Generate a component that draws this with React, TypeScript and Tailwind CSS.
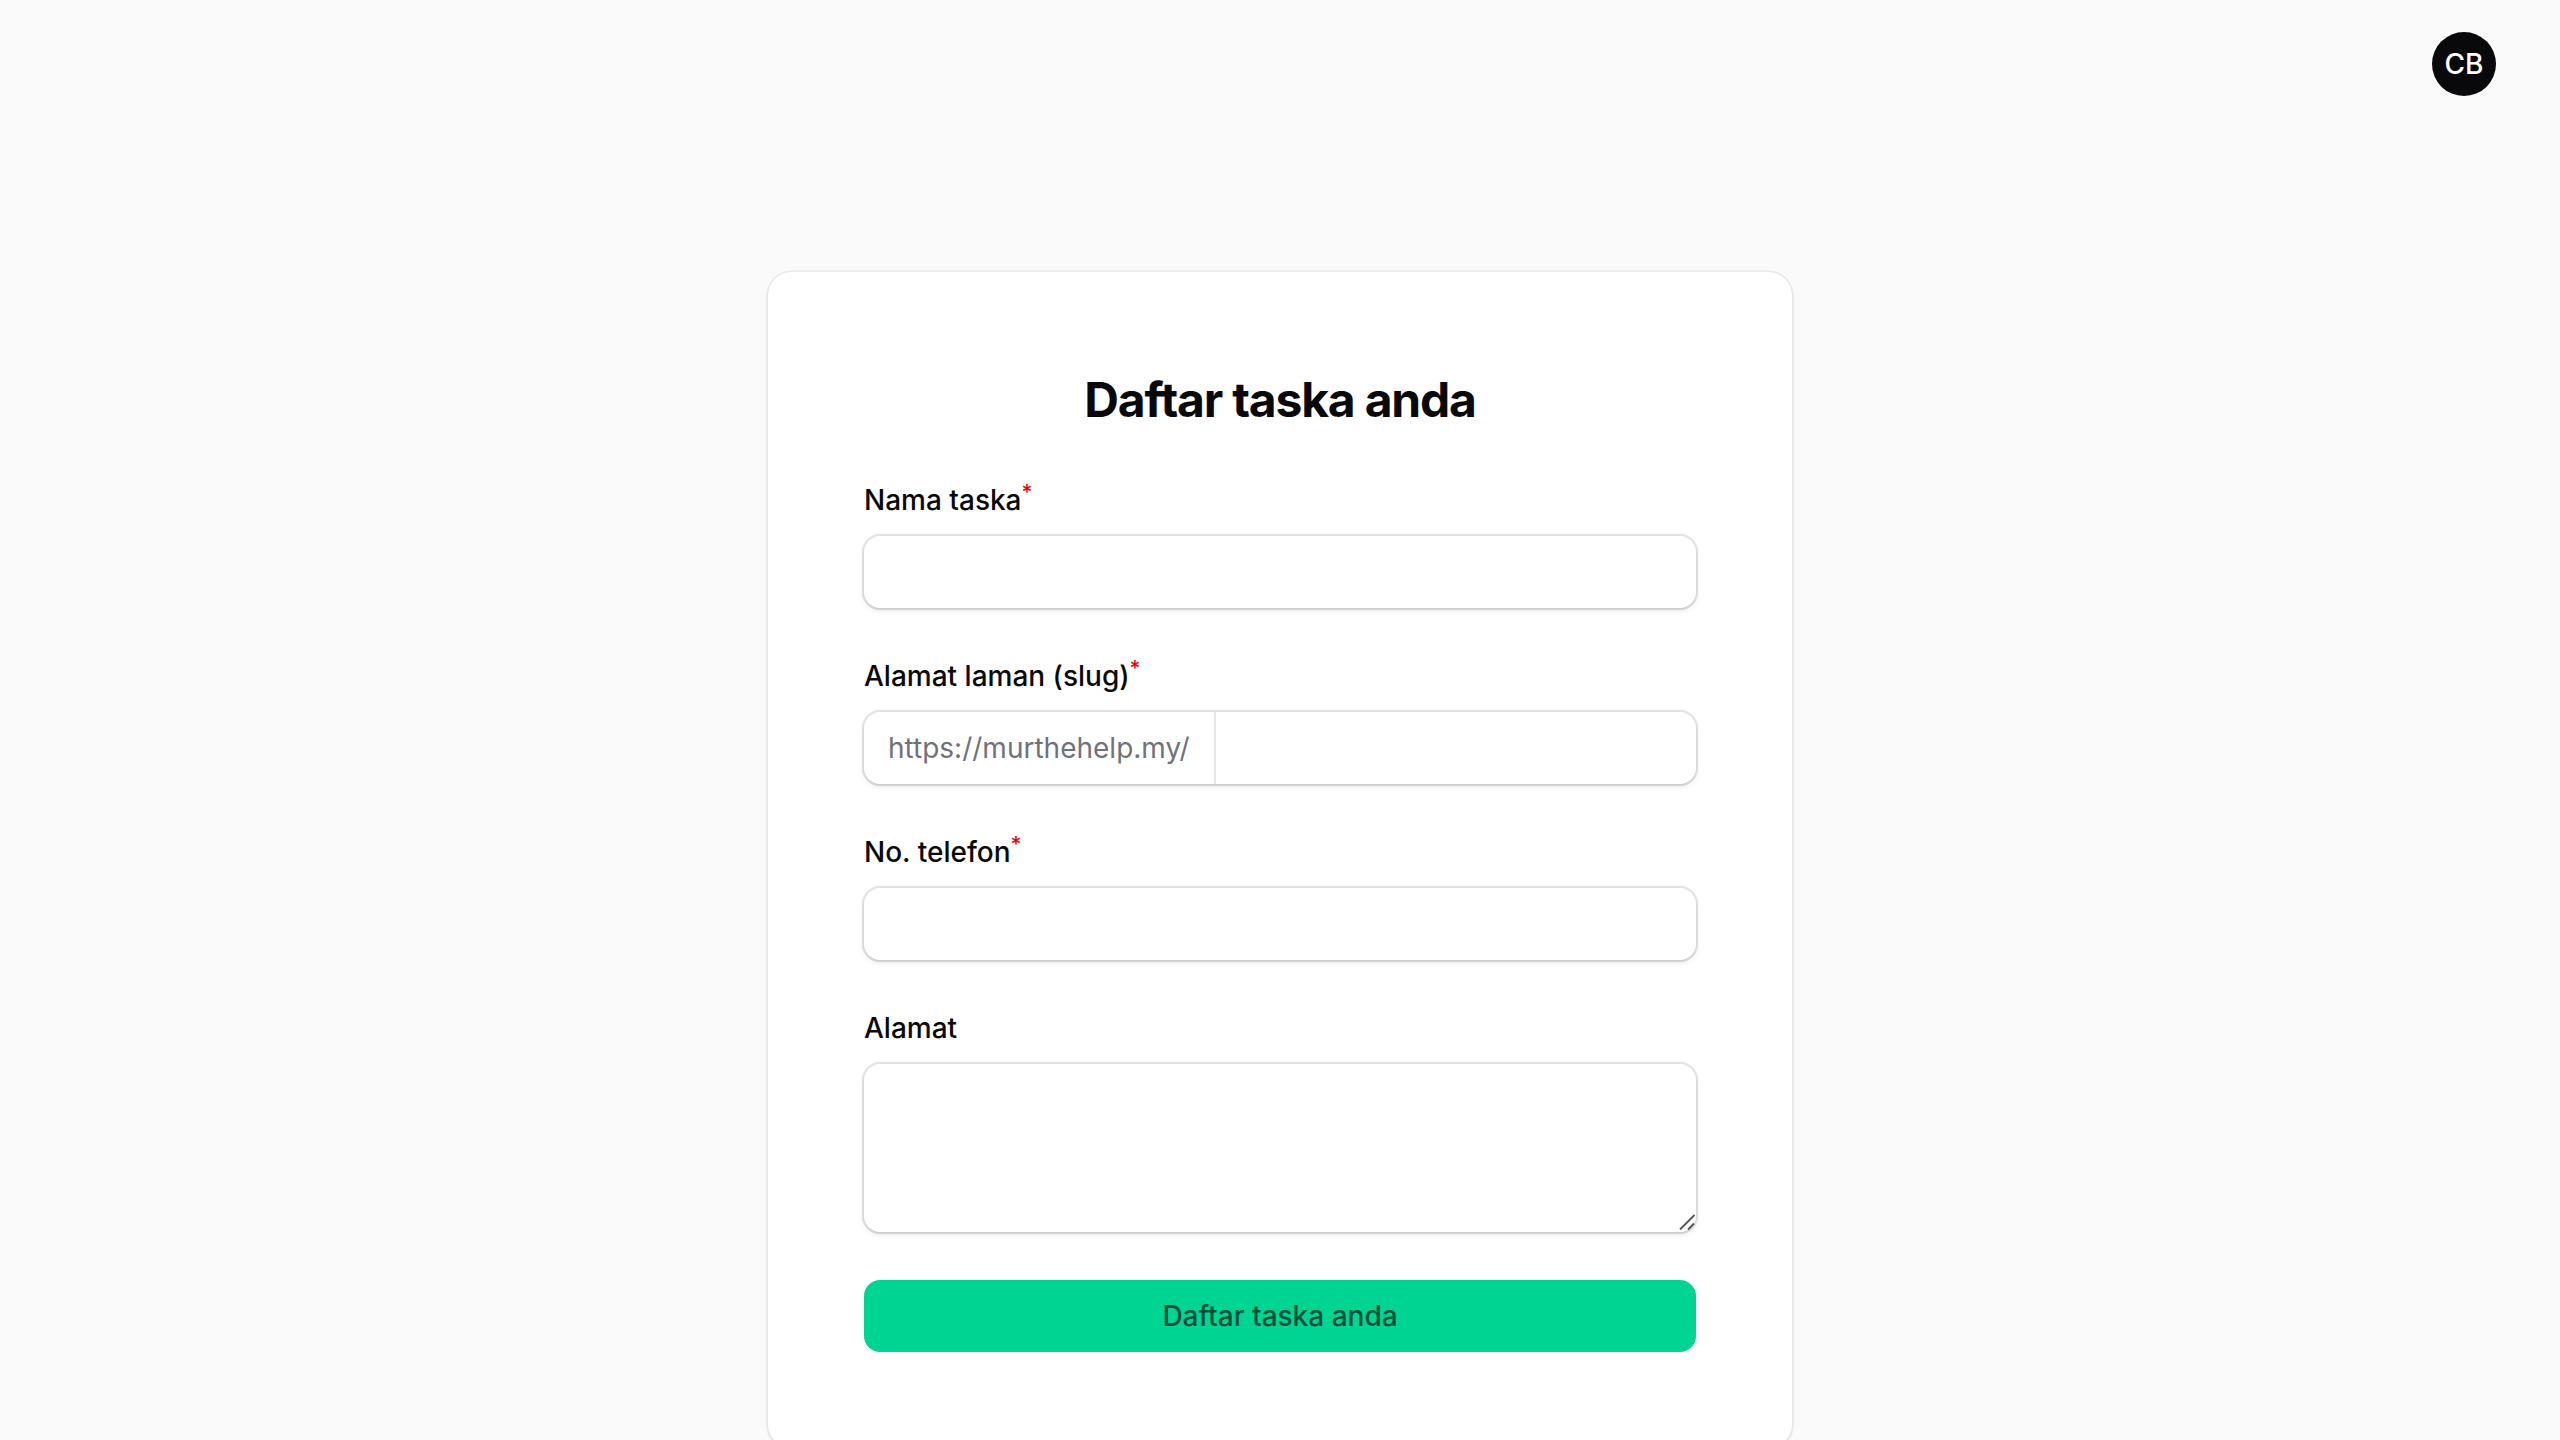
import { ReactNode } from "react";

type FieldProps = {
  id: string;
  label: string;
  required?: boolean;
  children: ReactNode;
};

const control =
  "flex rounded-2xl bg-white ring-2 ring-zinc-950/10 shadow-[0_2px_6px_0_rgb(0_0_0/0.1),0_2px_4px_-2px_rgb(0_0_0/0.1)] focus-within:ring-emerald-500";

const input =
  "block min-w-0 flex-1 bg-transparent px-6 py-3 text-[28px] leading-12 text-zinc-950 outline-none";

function Field({ id, label, required, children }: FieldProps) {
  return (
    <div className="flex flex-col gap-4">
      <label
        htmlFor={id}
        className="text-[28px] leading-10 font-medium text-zinc-950"
      >
        {label}
        {required && <sup className="text-red-600">*</sup>}
      </label>
      {children}
    </div>
  );
}

function ResizeGrip() {
  return (
    <svg
      className="pointer-events-none absolute right-0 bottom-0 size-5"
      viewBox="0 0 20 20"
      fill="none"
      stroke="#555"
      strokeWidth="1.8"
      aria-hidden="true"
    >
      <path d="M4 17.5 18.5 3M12 17.5 18 11.5" />
    </svg>
  );
}

export default function App() {
  return (
    <div className="flex min-h-screen flex-col bg-zinc-50 font-[Inter,sans-serif] text-zinc-950">
      <header className="flex h-32 items-center justify-end px-16">
        <button
          type="button"
          className="flex size-16 items-center justify-center rounded-full bg-zinc-950 text-[28px] leading-10 font-medium text-white"
        >
          CB
        </button>
      </header>

      <main className="mx-auto mt-36 w-full max-w-5xl rounded-3xl bg-white p-24 shadow-[0_2px_4px_0_rgb(0_0_0/0.05)] ring-2 ring-zinc-950/5">
        <h1 className="text-center text-5xl leading-16 font-bold tracking-tight">
          Daftar taska anda
        </h1>

        <form className="mt-12 flex flex-col gap-12">
          <Field id="name" label="Nama taska" required>
            <div className={control}>
              <input id="name" type="text" required className={input} />
            </div>
          </Field>

          <Field id="slug" label="Alamat laman (slug)" required>
            <div className={control}>
              <span className="flex items-center border-r-2 border-zinc-950/10 px-6 text-[28px] leading-10 text-zinc-500">
                https://murthehelp.my/
              </span>
              <input id="slug" type="text" required className={input} />
            </div>
          </Field>

          <Field id="phone" label="No. telefon" required>
            <div className={control}>
              <input id="phone" type="tel" required className={input} />
            </div>
          </Field>

          <Field id="address" label="Alamat">
            <div className={`relative ${control}`}>
              <textarea id="address" rows={3} className={`resize-none ${input}`} />
              <ResizeGrip />
            </div>
          </Field>

          <button
            type="submit"
            className="rounded-2xl bg-emerald-400 px-6 py-4 text-[28px] leading-10 font-medium text-emerald-900"
          >
            Daftar taska anda
          </button>
        </form>
      </main>
    </div>
  );
}
